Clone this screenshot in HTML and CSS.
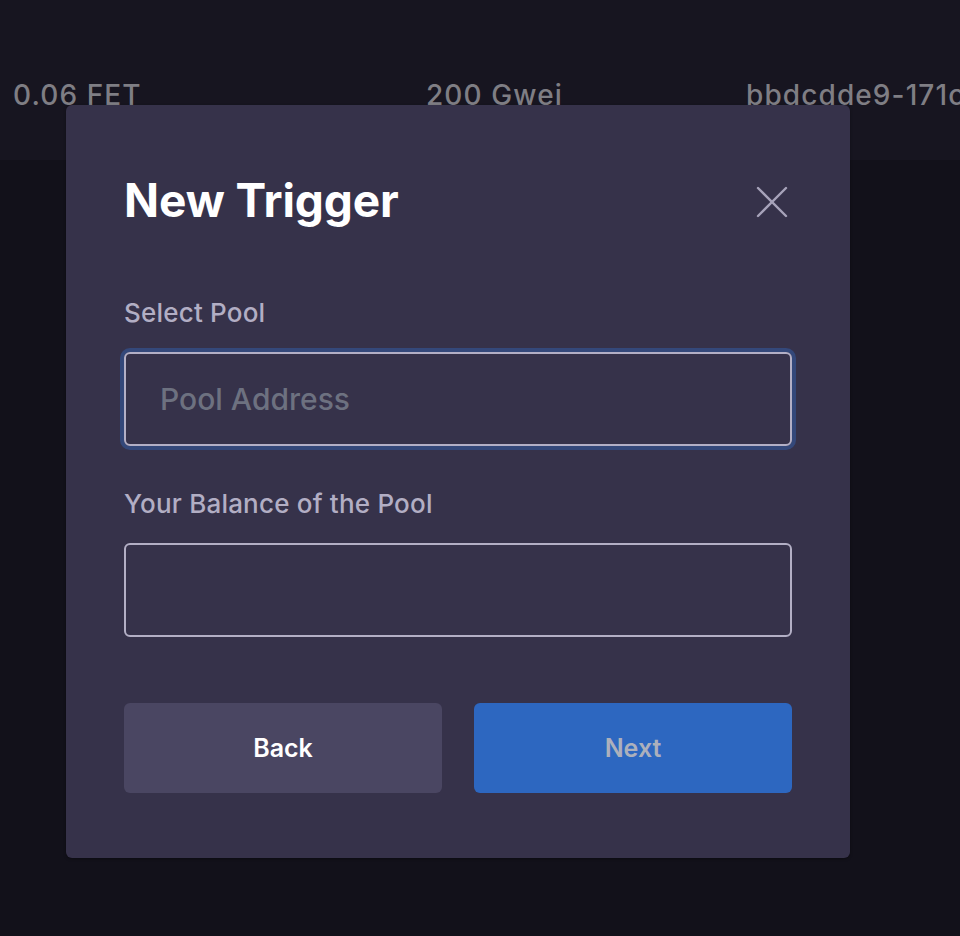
FILE: index.html
```html
<!DOCTYPE html>
<html lang="en">
<head>
<meta charset="utf-8">
<title>New Trigger</title>
<link rel="stylesheet" href="styles.css">
</head>
<body>
<div class="topbar">
  <span class="cell cell-fee">0.06 FET</span>
  <span class="cell cell-gas">200 Gwei</span>
  <span class="cell cell-id">bbdcdde9-171c</span>
</div>
<div class="modal">
  <div class="modal-head">
    <h1 class="modal-title">New Trigger</h1>
    <button class="close" aria-label="Close">
      <svg width="32" height="32" viewBox="0 0 32 32"><path d="M2 2 L30 30 M30 2 L2 30" stroke="#a7a3ba" stroke-width="2.4" stroke-linecap="round" fill="none"/></svg>
    </button>
  </div>
  <label class="field-label">Select Pool</label>
  <div class="input focused"><span class="placeholder">Pool Address</span></div>
  <label class="field-label second">Your Balance of the Pool</label>
  <div class="input"></div>
  <div class="actions">
    <button class="btn btn-back">Back</button>
    <button class="btn btn-next">Next</button>
  </div>
</div>
</body>
</html>
```
FILE: styles.css
```css
html, body {
  margin: 0;
  padding: 0;
}
body {
  background: #12111a;
  width: 960px;
  height: 936px;
  overflow: hidden;
  position: relative;
  font-family: Inter, "Noto Sans", sans-serif;
}
.topbar {
  height: 160px;
  background: #171520;
  display: flex;
  align-items: flex-start;
  padding-top: 78px;
  box-sizing: border-box;
  white-space: nowrap;
  overflow: hidden;
}
.cell {
  font-size: 28px;
  font-weight: 500;
  color: #7f7e84;
  letter-spacing: 1.1px;
  line-height: 34px;
  flex: none;
  box-sizing: border-box;
}
.cell-fee { padding-left: 13px; width: 426px; }
.cell-gas { width: 320px; }

.modal {
  position: absolute;
  left: 66px;
  top: 105px;
  width: 784px;
  height: 753px;
  box-sizing: border-box;
  background: #36324a;
  border-radius: 6px;
  box-shadow: 0 1px 3px rgba(0,0,0,0.35);
  padding: 0 58px;
  display: flex;
  flex-direction: column;
}
.modal-head {
  display: flex;
  justify-content: space-between;
  align-items: center;
  margin-top: 67px;
  height: 56px;
}
.modal-title {
  margin: 0;
  font-size: 46px;
  line-height: 56px;
  font-weight: 700;
  color: #ffffff;
  letter-spacing: -0.1px;
}
.close {
  background: none;
  border: 0;
  padding: 0;
  width: 32px;
  height: 32px;
  margin-right: 4px;
  margin-top: 4px;
  display: flex;
}
.field-label {
  display: block;
  font-size: 26px;
  font-weight: 500;
  color: #b2aec4;
  margin-top: 70px;
  line-height: 30px;
  letter-spacing: 0.2px;
}
.field-label.second { margin-top: 43px; }
.input {
  margin-top: 24px;
  height: 94px;
  box-sizing: border-box;
  border: 2px solid #b3afc5;
  border-radius: 6px;
  display: flex;
  align-items: center;
  padding-left: 34px;
}
.input.focused {
  box-shadow: 0 0 0 4px #34487a;
}
.placeholder {
  font-size: 30px;
  color: #6d7180;
  font-weight: 500;
}
.actions {
  display: flex;
  gap: 32px;
  margin-top: 66px;
}
.btn {
  flex: 1;
  height: 90px;
  border: 0;
  border-radius: 6px;
  font-family: inherit;
  font-size: 25px;
  font-weight: 600;
}
.btn-back {
  background: #4a4662;
  color: #ffffff;
}
.btn-next {
  background: #2d67c0;
  color: #acb0bc;
}
```
